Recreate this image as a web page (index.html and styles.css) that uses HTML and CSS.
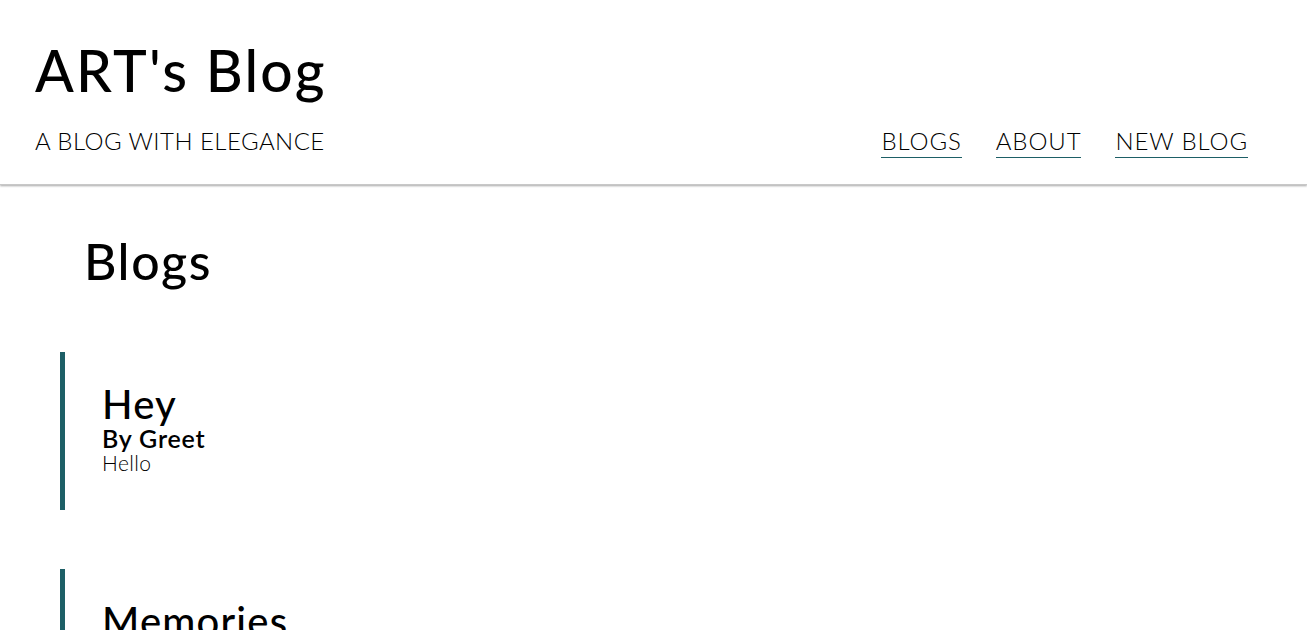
FILE: index.html
```html
<!DOCTYPE html>
<html lang="en">
<head>
<meta charset="utf-8">
<title>ART's Blog</title>
<link rel="stylesheet" href="styles.css">
</head>
<body>
<header class="site-header">
  <h1 class="site-title">ART's Blog</h1>
  <div class="header-row">
    <p class="tagline">A BLOG WITH ELEGANCE</p>
    <nav class="nav">
      <a href="#" class="nav-link">BLOGS</a>
      <a href="#" class="nav-link">ABOUT</a>
      <a href="#" class="nav-link">NEW BLOG</a>
    </nav>
  </div>
</header>
<main class="content">
  <h2 class="page-title">Blogs</h2>
  <article class="blog-card">
    <h3 class="blog-title">Hey</h3>
    <p class="blog-author">By Greet</p>
    <p class="blog-body">Hello</p>
  </article>
  <article class="blog-card">
    <h3 class="blog-title">Memories</h3>
    <p class="blog-author">By Greet</p>
    <p class="blog-body">Hello</p>
  </article>
</main>
</body>
</html>
```
FILE: styles.css
```css
html, body {
  margin: 0;
  padding: 0;
  background: #fff;
  color: #000;
  font-family: "Lato", "Open Sans", sans-serif;
}
.site-header {
  padding: 30px 59px 0 35px;
  height: 154px;
  box-shadow: 0 1px 2px rgba(0,0,0,0.35);
  border-bottom: 1px solid #c8c8c8;
}
.site-title {
  margin: 0;
  font-size: 57px;
  font-weight: 500;
  line-height: 80px;
  letter-spacing: 2.2px;
}
.header-row {
  display: flex;
  justify-content: space-between;
  align-items: flex-start;
  margin-top: 16px;
}
.tagline {
  margin: 0;
  font-size: 24px;
  font-weight: 300;
  line-height: 30px;
  letter-spacing: 0.45px;
}
.nav {
  display: flex;
  gap: 34px;
}
.nav-link {
  color: #000;
  text-decoration: none;
  font-size: 24px;
  font-weight: 300;
  line-height: 30px;
  letter-spacing: 0.9px;
  padding-bottom: 1px;
  border-bottom: 1px solid #1d5f66;
}
.content {
  padding: 46px 0 0 60px;
}
.page-title {
  margin: 0 0 61px 24px;
  font-size: 50px;
  font-weight: 500;
  letter-spacing: 1.6px;
}
.blog-card {
  border-left: 5px solid #1d5f66;
  padding: 30px 37px;
  height: 98px;
  margin-bottom: 59px;
}
.blog-title {
  margin: 0;
  font-size: 40px;
  font-weight: 500;
  line-height: 44px;
  letter-spacing: 1.2px;
}
.blog-author {
  margin: 0;
  font-size: 25px;
  font-weight: 600;
  line-height: 24px;
  letter-spacing: 0.8px;
}
.blog-body {
  margin: 3px 0 0;
  font-size: 21px;
  font-weight: 300;
  line-height: 20px;
  letter-spacing: 0.4px;
}
```
